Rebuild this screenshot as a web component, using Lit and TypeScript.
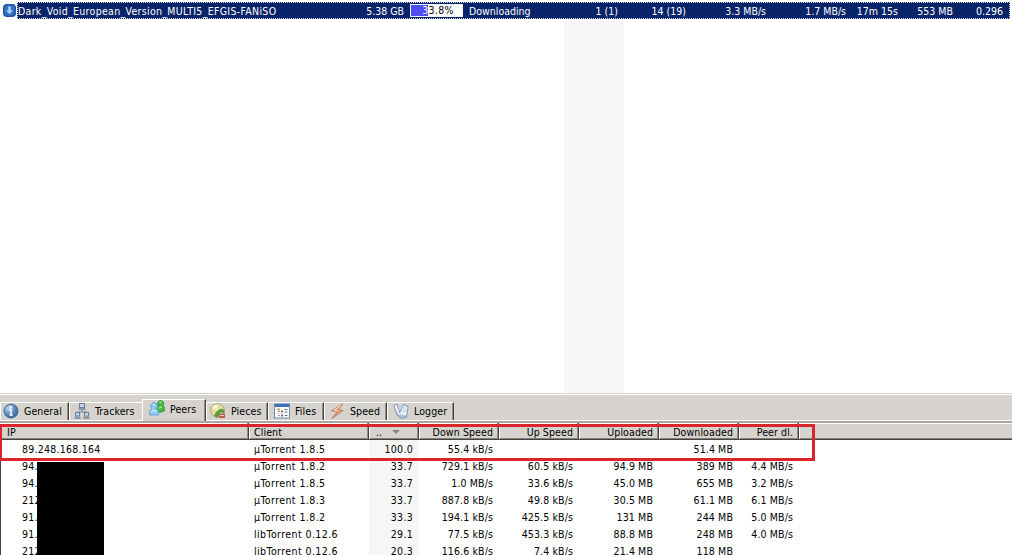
import { LitElement, html, css, svg } from "lit";
import { customElement, property } from "lit/decorators.js";

const icons: Record<string, unknown> = {
  General: svg`<defs><radialGradient id="g" cx=".35" cy=".3" r=".8"><stop offset="0" stop-color="#c3daf0"/><stop offset=".6" stop-color="#5585b8"/><stop offset="1" stop-color="#2d5a90"/></radialGradient></defs>
    <circle cx="8" cy="8" r="7" fill="url(#g)" stroke="#44688f"/><rect x="7" y="3.4" width="2" height="2" fill="#fff"/><path d="M6.500 6.800H8v5M6.500 12h3.200" stroke="#fff" stroke-width="1.500" fill="none"/>`,
  Trackers: svg`<path d="M8 6v3M3.500 11V9h9v2" stroke="#71879b" fill="none"/>
    <g fill="#c3d3e8" stroke="#667e9d"><rect x="5.500" y=".5" width="5" height="4"/><rect x="1.500" y="9.500" width="4" height="3.600"/><rect x="10.500" y="9.500" width="4" height="3.600"/></g>
    <path d="M4.500 6h7M.5 15h6M9.500 15h6" stroke="#70869b" stroke-width="1.400"/>`,
  Peers: svg`<path d="M7.500 9.500c0-2 .6-3 1.800-3.600a3.200 3.200 0 1 1 4.700 0c1.500.6 2 1.600 2 4.600l-3 1.500H7.500z" fill="#46b944" stroke="#268b35" stroke-width=".8"/><path d="M10.500 2.500q1-.8 1.800 0M10 8l3-1" stroke="#bdf0a8" stroke-width="1.200" fill="none"/>
    <path d="M.4 15c0-3.500.4-5.600 2.400-6.300a3.400 3.400 0 1 1 4.400 0c2 .7 2.600 2.800 2.600 6.300z" fill="#8ec9ef" stroke="#5597cf" stroke-width=".8"/><path d="M4 4.800q1-1 2 0M2.500 12l1-2 2 2 1.500-2" stroke="#e4f7ff" fill="none"/>`,
  Pieces: svg`<circle cx="7.500" cy="7.500" r="6.800" fill="#e7dda0" stroke="#a59b65" stroke-width=".8"/><path d="M2 5q2-4 6-3L7 7z" fill="#f8f4d0"/>
    <path d="M6 9l5-3.500L14.500 7v3L10 9.500 8 14.500q-3 0-4-2z" fill="#5c9c43"/><path d="M9 10.500h6v4.500H9z" fill="#b95b4d"/><path d="M10 12.500h4" stroke="#f5d6ce"/>`,
  Files: svg`<rect x=".5" y="1" width="15" height="14" fill="#f8fbff" stroke="#6c8eb8"/><path d="M1 2.500h14" stroke="#3e73bb" stroke-width="3"/><path d="M4.500 6v7M5 8.500h3M5 12.500h3" stroke="#999" stroke-dasharray="1 1"/>
    <path d="M3 5.500h3v2H3z" fill="#d6a452"/><path d="M7 7.500h2v2H7zM7 11.500h2v2H7z" fill="#b65f3e"/><path d="M10.500 6.500h3M10.500 9h3M10.500 12.500h3" stroke="#667d98"/>`,
  Speed: svg`<path d="M13 .8 1.500 7.800l5.500 1L2 15.400 13 7.600l-4.600-1.200z" fill="#e9a078" stroke="#a96c4c" stroke-width=".7"/><path d="M11 2.500 4 7.300l4 .7" fill="none" stroke="#ffe0bd"/>`,
  Logger: svg`<path d="M.8 2.500 4 1l2.500 9L11 1.200l4.200 2.300L13.500 14l-5 1.500L4 12z" fill="#a9bfdb" stroke="#7089aa" stroke-width=".8"/><path d="M6.500 11 11 2l3.400 2-1.300 8.500z" fill="#e8f2fd"/><path d="M1.500 3 3.500 2 7 12l-2-1z" fill="#f3f8ff"/><path d="m9 9 3-5M11 10l2-4" stroke="#a8bdd8" stroke-width=".7"/>`,
};

const tabs: [string, number, number][] = [
  ["General", 69, 24], ["Trackers", 73, 26], ["Peers", 64, 28], ["Pieces", 62, 25],
  ["Files", 56, 27], ["Speed", 63, 26], ["Logger", 67, 27],
];

const columns = ["IP", "Client", "..", "Down Speed", "Up Speed", "Uploaded", "Downloaded", "Peer dl."];

const peers = [
  ["89.248.168.164", "µTorrent 1.8.5", "100.0", "55.4 kB/s", "", "", "51.4 MB", ""],
  ["94.", "µTorrent 1.8.2", "33.7", "729.1 kB/s", "60.5 kB/s", "94.9 MB", "389 MB", "4.4 MB/s"],
  ["94.", "µTorrent 1.8.5", "33.7", "1.0 MB/s", "33.6 kB/s", "45.0 MB", "655 MB", "3.2 MB/s"],
  ["212", "µTorrent 1.8.3", "33.7", "887.8 kB/s", "49.8 kB/s", "30.5 MB", "61.1 MB", "6.1 MB/s"],
  ["91.", "µTorrent 1.8.2", "33.3", "194.1 kB/s", "425.5 kB/s", "131 MB", "244 MB", "5.0 MB/s"],
  ["91.", "libTorrent 0.12.6", "29.1", "77.5 kB/s", "453.3 kB/s", "88.8 MB", "248 MB", "4.0 MB/s"],
  ["212", "libTorrent 0.12.6", "20.3", "116.6 kB/s", "7.4 kB/s", "21.4 MB", "118 MB", ""],
];

@customElement("torrent-row")
class TorrentRow extends LitElement {
  @property({ type: Number }) progress = 33.8;
  static styles = css`
    :host { display: flex; height: 17px; padding-left: 3px; line-height: 17px; color: #fff; }
    svg { width: 13px; height: 13px; margin: 2px 1px 0 0; flex: none; }
    .row { box-sizing: border-box; width: 993px; height: 17px; background: #0a246a; border: 1px dotted #d5dbea; display: grid;
      grid-template-columns: 310px 76px 60px 80px 74px 68px 80px 80px 52px 55px 50px; line-height: 17px; white-space: nowrap; }
    .name { letter-spacing: 0.31px; }
    .num { text-align: right; }
    .bar { display: grid; width: 53px; height: 13px; margin: 1px 0 0 6px; box-sizing: border-box; border: 1px solid #eef0ff; background: #fff; color: #000; line-height: 11px; text-align: center; letter-spacing: 0.3px; }
    .fill, .label { grid-area: 1 / 1; }
    .fill { background: #4d4df0; }
    .label { padding-left: 3px; }
    .half { color: #fff; }
    .status { padding-left: 5px; }
  `;
  render() {
    return html`<svg viewBox="0 0 13 13"><rect width="13" height="13" rx="4" fill="#1c56a8"/><rect x="1.500" y="1.500" width="10" height="10" rx="3" fill="#3472c0"/><path d="M5.200 2.500h2.600v3.700H10L6.500 10.300 3 6.200h2.200z" fill="#a9cdf2"/></svg>
      <div class="row">
        <span class="name">Dark_Void_European_Version_MULTI5_EFGIS-FANiSO</span>
        <span class="num">5.38 GB</span>
        <span class="bar"><span class="fill" style="width:${this.progress}%"></span><span class="label"><span class="half">3</span>3.8%</span></span>
        <span class="status">Downloading</span>
        <span class="num">1 (1)</span>
        <span class="num">14 (19)</span>
        <span class="num">3.3 MB/s</span>
        <span class="num">1.7 MB/s</span>
        <span class="num">17m 15s</span>
        <span class="num">553 MB</span>
        <span class="num">0.296</span>
      </div>`;
  }
}

@customElement("detail-tabs")
class DetailTabs extends LitElement {
  static styles = css`
    :host { display: flex; align-items: flex-end; height: 24px; padding-top: 1px; background: #d6d3ce; border-top: 1px solid #fff; border-bottom: 1px solid #fff; }
    .tab { box-sizing: border-box; display: flex; height: 18px; border-top: 1px solid #fff; border-right: 1px solid #45413f; box-shadow: inset 1px 0 #fff, inset -1px 0 #918e89; line-height: 16px; white-space: nowrap; letter-spacing: 0.1px; }
    .tab.trackers { border-right: 0; box-shadow: inset 1px 0 #fff; }
    .tab.active { height: 22px; margin-bottom: -1px; background: #d6d3ce; line-height: 18px; }
    .icon { box-sizing: border-box; flex: none; }
    svg { display: block; width: 16px; height: 16px; }
    .general .icon { padding-left: 3px; }
    .trackers .icon { padding-left: 5px; }
    .peers .icon { padding-left: 7px; }
    .pieces .icon { padding-left: 4px; }
    .files .icon, .speed .icon, .logger .icon { padding-left: 6px; }
  `;
  render() {
    return tabs.map(([name, width, inset]) => html`
      <div class="tab ${name.toLowerCase()} ${name === "Peers" ? "active" : ""}" style="width:${width}px">
        <span class="icon" style="width:${inset}px"><svg viewBox="0 0 16 16">${icons[name]}</svg></span><span>${name}</span>
      </div>`);
  }
}

@customElement("peer-list")
class PeerList extends LitElement {
  static styles = css`
    :host { display: block; position: relative; background: #fff; }
    .head, .line { display: grid; grid-template-columns: 249px 120px 50px 80px 80px 80px 80px 60px 1fr; white-space: nowrap; }
    .head { box-sizing: border-box; height: 19px; border-top: 2px solid; border-image: linear-gradient(#aaa7a2 50%, #45413f 50%) 2 0 0; background: #d6d3ce; box-shadow: inset 0 1px #fff, inset 0 -1px #45413f, inset 0 -2px #827f7b; line-height: 19px; letter-spacing: 0.1px; }
    .head span { box-sizing: border-box; height: 16px; padding: 0 5px; text-align: right; border-right: 1px solid #45413f; box-shadow: inset -1px 0 #918e89, 1px 0 #fff; }
    .head span:nth-child(-n+3), .line span:nth-child(-n+2) { text-align: left; }
    .head span:first-child, .head span:nth-child(3) { padding-left: 7px; }
    .arrow { display: inline-block; border: 4px solid transparent; border-top-color: #898681; border-bottom: 0; margin-left: 10px; vertical-align: 2px; }
    .body { border-left: 1px solid #45413f; }
    .line { height: 17px; line-height: 18px; grid-template-columns: 248px 120px 50px 80px 80px 80px 80px 60px 1fr; letter-spacing: 0.12px; }
    .line span { padding-right: 6px; text-align: right; }
    .line span:first-child { padding-left: 21px; letter-spacing: 0.25px; }
    .line span:nth-child(2) { padding-left: 5px; letter-spacing: 0.42px; }
    .line span:nth-child(3) { background: #f6f6f6; letter-spacing: 0.3px; }
    .mask { position: absolute; left: 37px; top: 41px; width: 67px; height: 94px; background: #000; }
    .mark { position: absolute; box-sizing: border-box; left: -1px; top: 3px; width: 816px; height: 37px; border: 3px solid #d9252b; }
  `;
  render() {
    return html`<div class="head">${columns.map((c, i) => html`<span>${c}${i === 2 ? html`<i class="arrow"></i>` : ""}</span>`)}</div>
      <div class="body">${peers.map((p) => html`<div class="line">${p.map((v) => html`<span>${v}</span>`)}</div>`)}</div>
      <div class="mask"></div><div class="mark"></div>`;
  }
}

@customElement("app-root")
class AppRoot extends LitElement {
  static styles = css`
    :host { display: flex; flex-direction: column; box-sizing: border-box; width: 1012px; height: 555px; padding-top: 2px; overflow: hidden; background: #fff; color: #000;
      font: 10.5px "DejaVu Sans Condensed", "DejaVu Sans", sans-serif; font-stretch: condensed; }
    torrent-row, detail-tabs { flex: none; }
    .blank { height: 374px; flex: none; padding-left: 564px; border-bottom: 1px solid #d6d3ce; }
    .sorted { width: 60px; height: 374px; background: #f6f6f6; }
    peer-list { flex: 1; }
  `;
  render() {
    return html`<torrent-row></torrent-row><div class="blank"><div class="sorted"></div></div><detail-tabs></detail-tabs><peer-list></peer-list>`;
  }
}
